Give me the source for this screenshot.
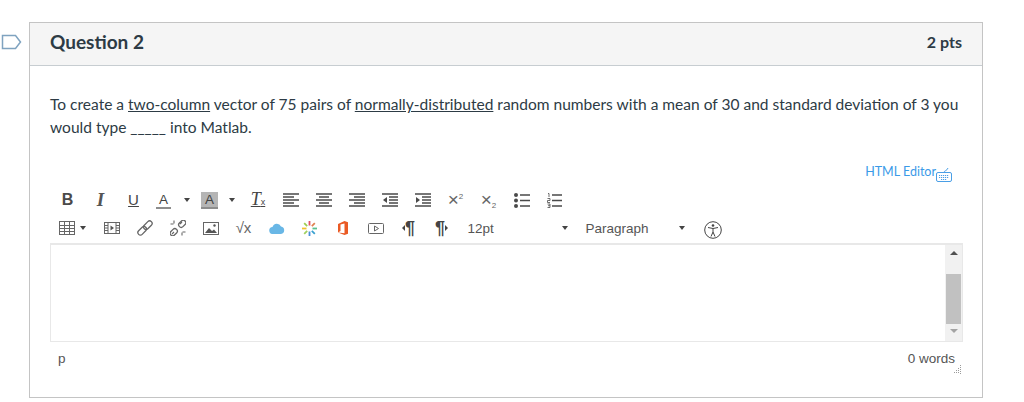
<div class="page">
	<div class="flag-col">
		<svg width="21" height="16" viewBox="0 0 21 16" fill="none"><path d="M1.500 1.500h13l5 6.500-5 6.500h-13z" stroke="#7fa3c0" stroke-width="1.500"/></svg>
	</div>
	<section class="card">
		<header class="head">
			<h2>Question 2</h2>
			<span class="pts">2 pts</span>
		</header>
		<div class="body">
			<p class="text">To create a <u>two-column</u> vector of 75 pairs of <u>normally-distributed</u> random numbers with a mean of 30 and standard deviation of 3 you would type _____ into Matlab.</p>
			<div class="html-row">
				<span class="html-link">HTML Editor</span>
				<svg width="16" height="15" viewBox="0 0 16 15" fill="none" stroke="#4a9fe6"><rect x=".5" y="5.500" width="15" height="9" rx="1.500"/><path d="M8 5.500c0-2 3-1.500 4-4.500"/><path d="M3 8.500h10M3 10.500h10M5 12.500h6" stroke-dasharray="1.200 .8"/></svg>
			</div>
			<div class="toolbar">
				<div class="tools">
					<span class="cell"><span class="b">B</span></span>
					<span class="cell"><span class="i">I</span></span>
					<span class="cell"><span class="u">U</span></span>
					<span class="cell color-a"><span class="a">A<em class="line"></em></span></span>
					<span class="cell caret-cell"><span class="caret"></span></span>
					<span class="cell color-b"><span class="a bg">A</span></span>
					<span class="cell caret-cell"><span class="caret"></span></span>
					<span class="cell tx-cell"><span class="tx">T<small>x</small></span></span>
					<span class="cell"><svg class="ln" width="16" height="14" viewBox="0 0 16 14"><path d="M0 1h16M0 4h11M0 7h16M0 10h11M0 13h16"/></svg></span>
					<span class="cell"><svg class="ln" width="16" height="14" viewBox="0 0 16 14"><path d="M0 1h16M3 4h10M0 7h16M3 10h10M0 13h16"/></svg></span>
					<span class="cell"><svg class="ln" width="16" height="14" viewBox="0 0 16 14"><path d="M0 1h16M5 4h11M0 7h16M5 10h11M0 13h16"/></svg></span>
					<span class="cell"><svg class="ln" width="16" height="14" viewBox="0 0 16 14"><path d="M0 1h16M7 4h9M7 7h9M7 10h9M0 13h16"/><path d="M5 4v6L1 7z" class="fl"/></svg></span>
					<span class="cell"><svg class="ln" width="16" height="14" viewBox="0 0 16 14"><path d="M0 1h16M7 4h9M7 7h9M7 10h9M0 13h16"/><path d="M1 4v6l4-3z" class="fl"/></svg></span>
					<span class="cell"><span class="script">×<sup>2</sup></span></span>
					<span class="cell"><span class="script">×<sub>2</sub></span></span>
					<span class="cell"><svg class="ln" width="16" height="15" viewBox="0 0 16 15"><path d="M6 2h10M6 7.500h10M6 13h10"/><circle cx="2" cy="2" r="2" class="fl"/><circle cx="2" cy="7.500" r="2" class="fl"/><circle cx="2" cy="13" r="2" class="fl"/></svg></span>
					<span class="cell"><svg class="ln" width="15" height="15" viewBox="0 0 15 15"><path d="M5 2h10M5 7.500h10M5 13h10"/><path class="tiny" d="M1 .5h1v3.500M.5 5.500h2.500v2h-2.500v2h2.500M.5 11h2.500v3.500h-2.500M1 12.700h2"/></svg></span>
				</div>
				<div class="tools">
					<span class="table-cell">
						<svg class="thin" width="16" height="14" viewBox="0 0 16 14"><rect x=".5" y=".5" width="15" height="13"/><path d="M.5 4.500h15M.5 7.500h15M.5 10.500h15M5.500 .5v13M10.500 .5v13"/></svg>
						<span class="caret"></span>
					</span>
					<span class="cell"><svg class="thin" width="16" height="12" viewBox="0 0 16 12"><rect x=".5" y=".5" width="15" height="11"/><path d="M4 .5v11M12 .5v11M.5 3.500H4M.5 6H4M.5 8.500H4M12 3.500h3.500M12 6h3.500M12 8.500h3.500"/><path d="M6.500 3.500v5l3.500-2.500z" class="fl"/></svg></span>
					<span class="cell"><svg class="thin" width="16" height="16" viewBox="0 0 16 16"><g transform="rotate(-45 8 8)" stroke-width="1.300"><rect x="-1" y="5.500" width="10" height="5" rx="2.500"/><rect x="7" y="5.500" width="10" height="5" rx="2.500"/></g></svg></span>
					<span class="cell"><svg class="thin" width="16" height="16" viewBox="0 0 16 16"><g transform="rotate(-45 8 8)" stroke-width="1.300"><rect x="-2" y="5.500" width="8" height="5" rx="2.500"/><rect x="10" y="5.500" width="8" height="5" rx="2.500"/></g><path d="M4 .5v3M.5 4h3M12 12.500v3M12.500 12h3M10 4l2-2M4 12l-2 2" stroke-width="1.100"/></svg></span>
					<span class="cell"><svg class="thin" width="16" height="13" viewBox="0 0 16 13"><rect x=".5" y=".5" width="15" height="12"/><path d="M2 11l4-5 3 3 2-1.500 3 3.500z" class="fl"/><circle cx="11.500" cy="3.500" r="1.200" class="fl"/></svg></span>
					<span class="cell"><span class="root">√x</span></span>
					<span class="cell"><svg width="16" height="11" viewBox="0 0 16 11"><path d="M4 11a3.500 3.500 0 0 1-.5-7A4.500 4.500 0 0 1 12 3.500a3.800 3.800 0 0 1 0 7.500z" fill="#69b7e6"/></svg></span>
					<span class="cell"><svg width="15" height="15" viewBox="0 0 15 15" stroke-width="1.800"><path d="M7.500 0v4.500" stroke="#e0506a"/><path d="M7.500 10.500v4.500" stroke="#4a90d9"/><path d="M0 7.500h4.500" stroke="#f2c230"/><path d="M10.500 7.500h4.500" stroke="#5ac18e"/><path d="M2.200 2.200l3 3" stroke="#9ccc50"/><path d="M9.800 9.800l3 3" stroke="#38a0d0"/><path d="M12.800 2.200l-3 3" stroke="#e08050"/><path d="M5.200 9.800l-3 3" stroke="#a0d060"/></svg></span>
					<span class="cell"><svg width="10" height="14" viewBox="0 0 10 14"><path d="M0 3l6.500-3L10 1.200v11.600L6.500 14 0 11.500l6.500.8V2.500L2.500 3.500v6.500L0 11.500z" fill="#ea5a24"/></svg></span>
					<span class="cell"><svg class="thin" width="16" height="11" viewBox="0 0 16 11"><rect x=".5" y=".5" width="15" height="10" rx="1"/><path d="M6.500 3v5l4-2.500z"/></svg></span>
					<span class="cell"><span class="pil"><i class="ar l"></i>¶</span></span>
					<span class="cell"><span class="pil">¶<i class="ar r"></i></span></span>
					<span class="sel size">12pt<span class="caret"></span></span>
					<span class="sel para">Paragraph<span class="caret"></span></span>
					<svg class="access" width="18" height="18" viewBox="0 0 18 18" fill="none" stroke="#444"><circle cx="9" cy="9" r="8.300"/><circle cx="9" cy="4.500" r="1.300" fill="#444" stroke="none"/><path d="M4 6.500l5 1 5-1M9 7.500v3.500M9 11l-2 4.500M9 11l2 4.500"/></svg>
				</div>
			</div>
			<div class="editor">
				<div class="area"></div>
				<div class="scroll">
					<span class="up"></span>
					<div class="track"><div class="thumb"></div></div>
					<span class="down"></span>
				</div>
			</div>
			<div class="status">
				<span>p</span>
				<span class="words">0 words</span>
				<svg class="grip" width="10" height="10" viewBox="0 0 10 10" fill="#9a9a9a"><rect x="8" y="0" width="1" height="1"/><rect x="8" y="2" width="1" height="1"/><rect x="8" y="4" width="1" height="1"/><rect x="8" y="6" width="1" height="1"/><rect x="8" y="8" width="1" height="1"/><rect x="6" y="3" width="1" height="1"/><rect x="6" y="5" width="1" height="1"/><rect x="6" y="7" width="1" height="1"/><rect x="4" y="5" width="1" height="1"/><rect x="4" y="7" width="1" height="1"/><rect x="2" y="7" width="1" height="1"/></svg>
			</div>
		</div>
	</section>
</div>

<style>
	:global(body) {
		margin: 0;
		background: #fff;
	}

	.page {
		display: flex;
		padding-top: 22px;
		height: 380px;
		font-family: Lato, sans-serif;
		color: #2d3b45;
	}

	.flag-col {
		width: 29px;
		padding-top: 12px;
		padding-left: 1px;
		box-sizing: border-box;
	}

	.card {
		width: 954px;
		height: 376px;
		box-sizing: border-box;
		border: 1px solid #c4c4c4;
	}

	.head {
		display: flex;
		justify-content: space-between;
		align-items: center;
		height: 43px;
		padding: 0 20px 5px 20px;
		box-sizing: border-box;
		background: #f5f5f5;
		border-bottom: 1px solid #c7cdd1;
	}

	h2 {
		margin: 0;
		font-size: 19px;
		font-weight: 700;
		line-height: 1;
	}

	.pts {
		font-size: 16px;
		font-weight: 700;
	}

	.body {
		padding: 27px 20px 0;
	}

	.text {
		margin: 0;
		font-size: 15.540px;
		line-height: 23px;
		width: 915px;
	}

	.html-row {
		display: flex;
		justify-content: flex-end;
		align-items: flex-start;
		margin-top: 25px;
		height: 20px;
		padding-right: 10px;
	}

	.html-link {
		font-size: 12.500px;
		line-height: 16px;
		color: #3a9ae8;
	}

	.html-row svg {
		margin-top: 3px;
	}

	.toolbar {
		font-family: 'Liberation Sans', Arial, sans-serif;
		color: #444;
		margin-top: 2px;
	}

	.tools {
		display: flex;
		align-items: center;
		height: 28px;
		padding-left: 1px;
	}

	.cell {
		display: flex;
		align-items: center;
		justify-content: center;
		width: 33px;
		flex: none;
	}

	.color-a {
		width: 27px;
	}

	.color-b {
		width: 25px;
	}

	.caret-cell {
		width: 20px;
	}

	.tx-cell {
		width: 32px;
	}

	.b {
		font-weight: 700;
		font-size: 16px;
		line-height: 16px;
		color: #4a4a4a;
	}

	.i {
		font-style: italic;
		font-weight: 700;
		font-family: 'Liberation Serif', serif;
		font-size: 19px;
		line-height: 16px;
		color: #555;
	}

	.u {
		text-decoration: underline;
		font-size: 15px;
		line-height: 16px;
	}

	.a {
		display: block;
		font-size: 13.500px;
		line-height: 15px;
		width: 15px;
		text-align: center;
	}

	.line {
		display: block;
		height: 2px;
		background: #8d8d8d;
	}

	.bg {
		background: #b5b5b5;
		width: 17px;
		border-bottom: 2px solid #8d8d8d;
	}

	.caret {
		display: inline-block;
		width: 0;
		height: 0;
		border: 3.500px solid transparent;
		border-top: 4px solid #444;
		border-bottom: 0;
	}

	.tx {
		font-family: 'Liberation Serif', serif;
		font-style: italic;
		font-size: 18px;
		line-height: 16px;
		text-decoration: underline;
		text-decoration-thickness: 1px;
	}

	.tx small {
		font-size: 9px;
		font-style: normal;
		font-family: 'Liberation Sans', sans-serif;
	}

	.ln path {
		stroke: #4a4a4a;
		stroke-width: 1.500;
		fill: none;
	}

	.ln .tiny {
		stroke-width: .8;
	}

	.ln .fl,
	.ln circle {
		fill: #4a4a4a;
		stroke: none;
	}

	.script {
		font-size: 19px;
		line-height: 16px;
		color: #666;
	}

	.script sup,
	.script sub {
		font-size: 8px;
		line-height: 0;
	}

	.script sub {
		vertical-align: -2px;
	}

	.thin {
		fill: none;
		stroke: #666;
		flex: none;
	}

	.thin .fl {
		fill: #555;
		stroke: none;
	}

	.root {
		font-size: 15px;
		line-height: 16px;
		color: #666;
	}

	.pil {
		font-weight: 700;
		font-size: 18px;
		line-height: 16px;
		display: flex;
		align-items: center;
	}

	.ar {
		display: inline-block;
		border: 3px solid transparent;
	}

	.ar.l {
		border-left: 0;
		border-right: 3px solid #444;
	}

	.ar.r {
		border-right: 0;
		border-left: 3px solid #444;
	}

	.table-cell {
		display: flex;
		align-items: center;
		gap: 5px;
		width: 44px;
		padding-left: 8px;
		box-sizing: border-box;
		flex: none;
	}

	.sel {
		display: flex;
		align-items: center;
		justify-content: space-between;
		font-size: 13.500px;
		color: #555;
		box-sizing: border-box;
		flex: none;
	}

	.size {
		width: 117.500px;
		padding: 0 8px 0 9.500px;
	}

	.para {
		width: 118px;
		padding: 0 9px 0 10px;
	}

	.access {
		margin-left: 10px;
		margin-top: 3px;
	}

	.editor {
		display: flex;
		height: 99px;
		border: 1px solid #e8e8e8;
		border-width: 2px 1px 1px 1px;
		margin-top: 1px;
		box-sizing: border-box;
		width: 913px;
	}

	.area {
		flex: 1;
	}

	.scroll {
		width: 17px;
		background: #f1f1f1;
		display: flex;
		flex-direction: column;
		align-items: center;
	}

	.up,
	.down {
		width: 0;
		height: 0;
		border: 4px solid transparent;
		flex: none;
	}

	.up {
		border-top: 0;
		border-bottom: 4px solid #505050;
		margin-top: 6px;
	}

	.down {
		border-bottom: 0;
		border-top: 4px solid #a3a3a3;
		margin-bottom: 8px;
	}

	.track {
		flex: 1;
		width: 100%;
		padding: 19px 1px 0;
		box-sizing: border-box;
	}

	.thumb {
		background: #c1c1c1;
		height: 50px;
	}

	.status {
		display: flex;
		justify-content: space-between;
		font-family: 'Liberation Sans', Arial, sans-serif;
		font-size: 13.500px;
		color: #555;
		padding: 9px 8px 0 8px;
		position: relative;
		width: 913px;
		box-sizing: border-box;
		line-height: 16px;
	}

	.grip {
		position: absolute;
		right: 1px;
		top: 23px;
	}
</style>
